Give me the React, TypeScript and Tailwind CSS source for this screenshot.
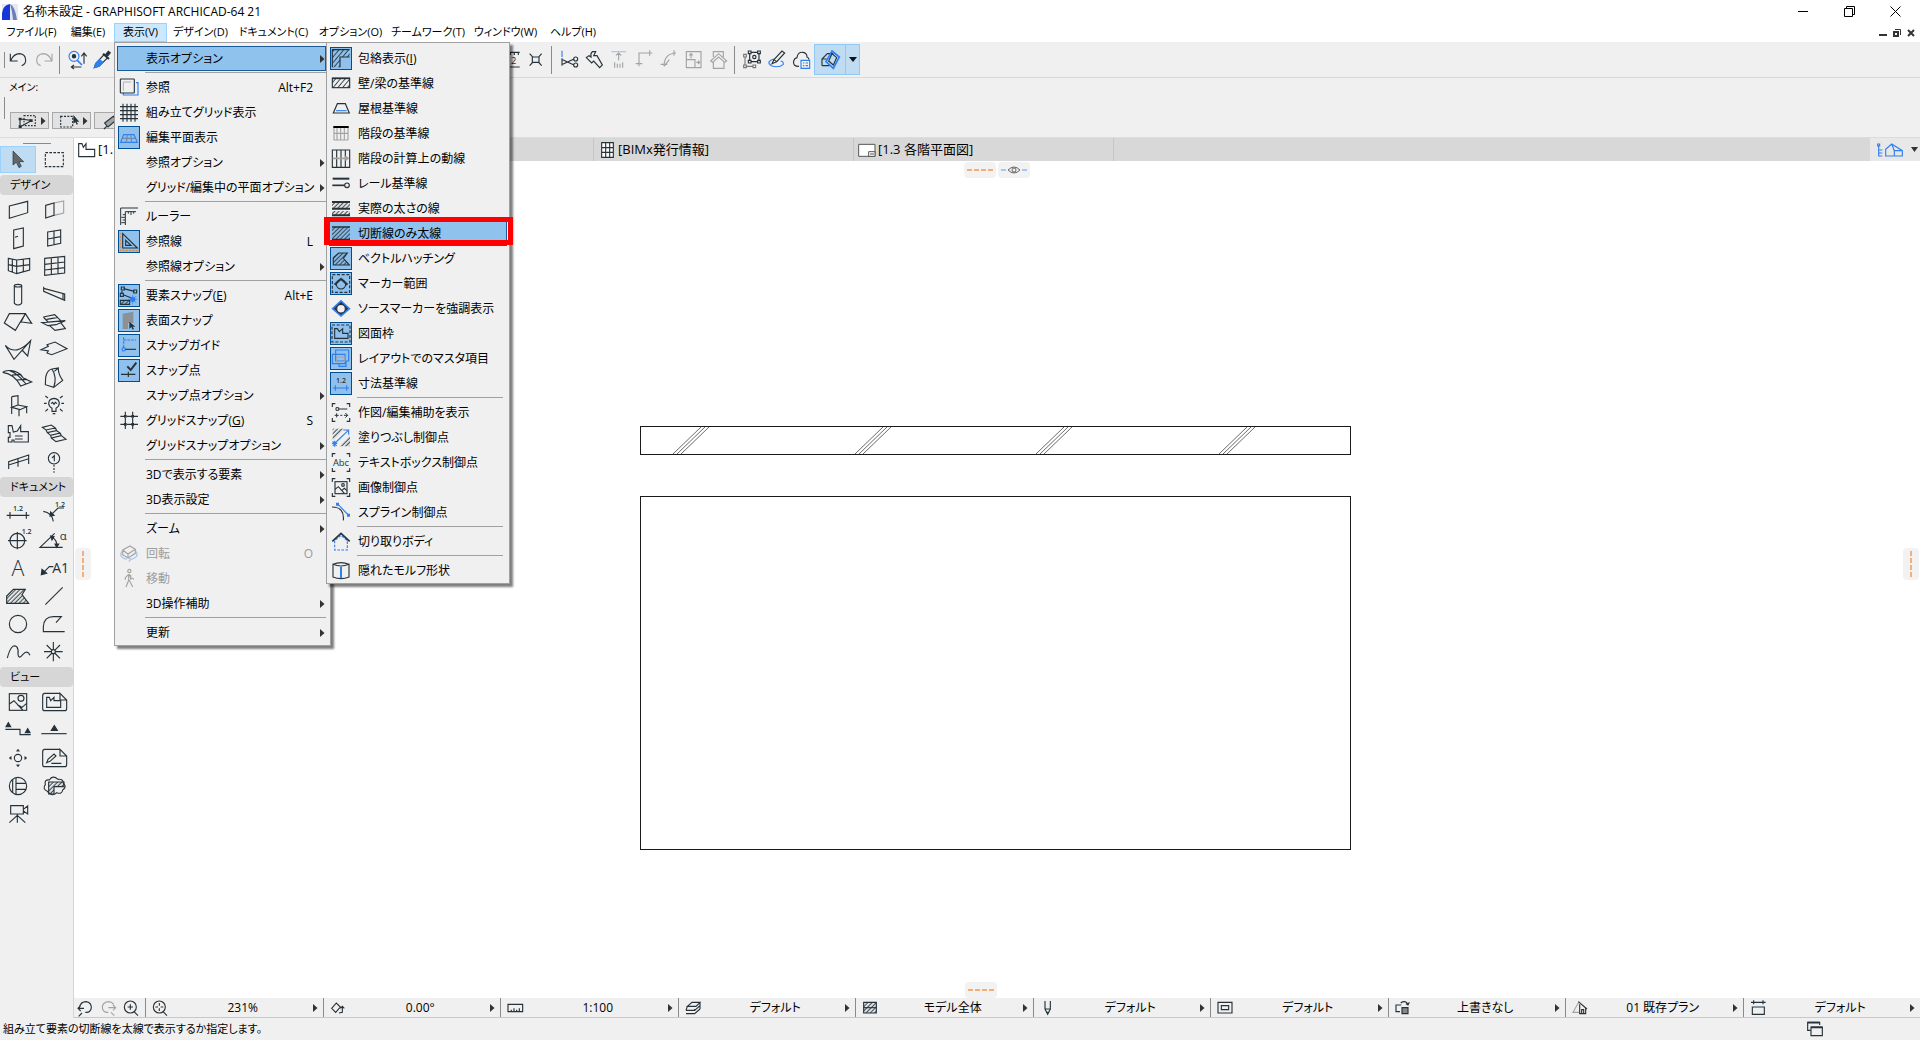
import type { ReactNode } from "react";
import clsx from "clsx";

const INK = "#26323a";
const BLUE = "#2f7ff0";
const GRAY = "#a3a3a3";

type IconProps = { w: number; h: number; children: ReactNode; className?: string };

// Icons are drawn on a grid three times finer than their size on screen.
function Icon({ w, h, children, className }: IconProps) {
  return (
    <svg
      width={w}
      height={h}
      viewBox={`0 0 ${w * 3} ${h * 3}`}
      fill="none"
      stroke={INK}
      strokeWidth={3.4}
      className={clsx("block shrink-0 overflow-visible", className)}
      aria-hidden="true"
    >
      {children}
    </svg>
  );
}

function IconText({ x, y, size, children, weight = 400 }: { x: number; y: number; size: number; children: string; weight?: number }) {
  return (
    <text x={x} y={y} fontSize={size} fontWeight={weight} fill={INK} stroke="none" textAnchor="middle" fontFamily="Open Sans, sans-serif">
      {children}
    </text>
  );
}

function Patterns() {
  return (
    <svg className="absolute size-0" aria-hidden="true">
      <defs>
        <pattern id="hatch" width="9" height="9" patternUnits="userSpaceOnUse" patternTransform="rotate(45)">
          <path d="M4 0V9" stroke={INK} strokeWidth="3" />
        </pattern>
        <pattern id="hatch-wide" width="11" height="11" patternUnits="userSpaceOnUse" patternTransform="rotate(40)">
          <path d="M4 0V11" stroke={INK} strokeWidth="2.6" />
        </pattern>
      </defs>
    </svg>
  );
}

function Arrow() {
  return (
    <svg width="5" height="8" viewBox="0 0 5 8" className="block shrink-0" aria-hidden="true">
      <path d="M0 0L4.500 4L0 8Z" fill="#333" />
    </svg>
  );
}

/* ---------- menus ---------- */

type MenuEntry =
  | "-"
  | { label: string; mnemonic?: string; keys?: string; icon?: ReactNode; on?: boolean; sub?: boolean; disabled?: boolean; hot?: boolean };

const viewMenu: MenuEntry[] = [
  { label: "表示オプション", sub: true, hot: true },
  "-",
  {
    label: "参照",
    keys: "Alt+F2",
    icon: (
      <>
        <path d="M54 20H60V57H16V50" stroke={BLUE} />
        <rect x="7" y="9" width="42" height="42" rx="2" />
        <path d="M16 44V18H40" stroke={GRAY} strokeWidth="2.500" />
      </>
    ),
  },
  { label: "組み立てグリッド表示", icon: <path d="M15 8V62M27 8V62M39 8V62M51 8V62M6 17H60M6 29H60M6 41H60M6 53H60" /> },
  {
    label: "編集平面表示",
    on: true,
    icon: (
      <>
        <path d="M17 26H48L58 49H8Z" stroke={BLUE} />
        <path d="M13 37H53M28 26L25 49M38 26L41 49" stroke="#6e8ba8" />
      </>
    ),
  },
  { label: "参照オプション", sub: true },
  { label: "グリッド/編集中の平面オプション", sub: true },
  "-",
  { label: "ルーラー", icon: <path d="M60 9H8V60M22 60V20H54M31 20V26M39 20V30M47 20V26M22 29H14M22 37H10M22 45H14M22 53H10" strokeWidth="3" /> },
  {
    label: "参照線",
    keys: "L",
    on: true,
    icon: (
      <>
        <path d="M7 8V62H60" stroke="#e08a3c" strokeDasharray="6 4" />
        <path d="M14 11V54H58ZM23 31V46H39Z" />
      </>
    ),
  },
  { label: "参照線オプション", sub: true },
  "-",
  {
    label: "要素スナップ",
    mnemonic: "E",
    keys: "Alt+E",
    on: true,
    icon: (
      <>
        <path d="M17 14L49 22M12 20V30" />
        <path d="M10 9H19V18H10ZM7 28H16V37H7ZM47 18H56V27H47ZM16 32L40 42" />
        <path d="M7 49H35V61H7Z" fill="url(#hatch)" />
        <circle cx="44" cy="46" r="8" fill={BLUE} stroke="none" />
        <path d="M44 33V61M31 46H58M34 36L55 57M55 36L34 57" stroke={BLUE} strokeWidth="2" />
      </>
    ),
  },
  {
    label: "表面スナップ",
    on: true,
    icon: (
      <>
        <path d="M14 14L46 8V42H30V60H14Z" fill="#8d9196" stroke="none" />
        <path d="M34 38V60L40 54L44 62L48 60L44 53H52Z" fill={INK} stroke="none" />
      </>
    ),
  },
  {
    label: "スナップガイド",
    on: true,
    icon: (
      <>
        <path d="M17 10V42M17 18H54" stroke={BLUE} strokeDasharray="8 3" />
        <circle cx="17" cy="46" r="5" stroke={BLUE} />
        <path d="M22 46H54" />
      </>
    ),
  },
  {
    label: "スナップ点",
    on: true,
    icon: (
      <>
        <path d="M28 22L38 33L55 11" strokeWidth="6" />
        <path d="M9 46H26M36 46H52M31 38V54M23 46H39" />
      </>
    ),
  },
  { label: "スナップ点オプション", sub: true },
  {
    label: "グリッドスナップ",
    mnemonic: "G",
    keys: "S",
    icon: (
      <>
        <path d="M22 8V60M44 8V60M7 22H60M7 46H60" strokeDasharray="16 3" />
        <path d="M18 22h8M40 22h8M18 46h8M40 46h8" strokeWidth="8" />
      </>
    ),
  },
  { label: "グリッドスナップオプション", sub: true },
  "-",
  { label: "3Dで表示する要素", sub: true },
  { label: "3D表示設定", sub: true },
  "-",
  { label: "ズーム", sub: true },
  {
    label: "回転",
    keys: "O",
    disabled: true,
    icon: (
      <>
        <path d="M14 24L36 12L52 22L30 36ZM14 24V38L30 48V36M52 22V34L30 48" stroke={GRAY} />
        <path d="M12 28Q0 46 26 52M54 28Q66 46 36 53M32 47L38 53L32 59" stroke="#a5c5ee" />
      </>
    ),
  },
  {
    label: "移動",
    disabled: true,
    icon: (
      <>
        <circle cx="34" cy="12" r="5" stroke={GRAY} />
        <path d="M32 22L22 32V38M34 22L38 32L48 37M32 22V40L24 60M34 40L44 60M38 24V38" stroke={GRAY} />
      </>
    ),
  },
  { label: "3D操作補助", sub: true },
  "-",
  { label: "更新", sub: true },
];

const brackets = <path d="M16 8H7V18M50 8H59V18M16 61H7V51M50 61H59V51" />;

const displayOptions: MenuEntry[] = [
  {
    label: "包絡表示",
    mnemonic: "I",
    on: true,
    icon: (
      <>
        <path d="M7 8H59V30H30V61H7Z" fill="url(#hatch-wide)" stroke="none" />
        <path d="M7 8H59M7 7V61M59 30H30V61" />
      </>
    ),
  },
  {
    label: "壁/梁の基準線",
    icon: (
      <>
        <rect x="7" y="19" width="52" height="28" fill="url(#hatch-wide)" />
        <path d="M6 19H60" strokeWidth="5" />
      </>
    ),
  },
  {
    label: "屋根基準線",
    icon: (
      <>
        <path d="M22 20H46L58 48H10Z" />
        <path d="M18 41H50" stroke={BLUE} />
      </>
    ),
  },
  {
    label: "階段の基準線",
    icon: (
      <>
        <path d="M12 14V55M21 14V55M32 14V55M43 14V55M54 14V55M12 34H54M12 54H54" stroke={GRAY} />
        <path d="M10 15H56" stroke="#000" strokeWidth="6" />
      </>
    ),
  },
  {
    label: "階段の計算上の動線",
    icon: (
      <>
        <path d="M7 9H59V61H7ZM20 9V61M33 9V61M46 9V61" />
        <path d="M8 34H54M46 28L54 34L46 40" stroke={GRAY} strokeWidth="5" />
      </>
    ),
  },
  {
    label: "レール基準線",
    icon: (
      <>
        <path d="M8 20H58" strokeWidth="6" />
        <path d="M7 40H44" strokeWidth="5" />
        <circle cx="51" cy="40" r="7" />
      </>
    ),
  },
  {
    label: "実際の太さの線",
    icon: (
      <>
        <path d="M6 14H60V34H6ZM6 42H60V56H6Z" fill="url(#hatch)" stroke="none" />
        <path d="M6 15H60M6 35H60M6 55H60" strokeWidth="6" />
      </>
    ),
  },
  {
    label: "切断線のみ太線",
    hot: true,
    icon: (
      <>
        <path d="M6 14H60V54H6Z" fill="url(#hatch)" stroke="none" />
        <path d="M6 15H60M6 53H60" strokeWidth="5" />
      </>
    ),
  },
  { label: "ベクトルハッチング", on: true, icon: <path d="M10 54V32L26 18H52L40 34L58 54Z" fill="url(#hatch)" /> },
  {
    label: "マーカー範囲",
    on: true,
    icon: (
      <>
        <rect x="7" y="8" width="52" height="53" strokeDasharray="9 5" />
        <path d="M12 36L33 17L54 36L50 40L33 24L16 40Z" fill={INK} strokeWidth="1" />
        <circle cx="33" cy="37" r="14" />
      </>
    ),
  },
  {
    label: "ソースマーカーを強調表示",
    icon: (
      <>
        <path d="M8 35L33 12L58 35L33 57Z" fill={INK} stroke={BLUE} strokeWidth="5" />
        <circle cx="33" cy="35" r="13" fill="#f0f0f0" />
      </>
    ),
  },
  {
    label: "図面枠",
    on: true,
    icon: (
      <>
        <rect x="6" y="9" width="54" height="51" strokeDasharray="9 5" />
        <path d="M14 20H22L28 29L38 20V34H54V49H14Z" />
      </>
    ),
  },
  {
    label: "レイアウトでのマスタ項目",
    on: true,
    icon: (
      <>
        <path d="M17 9H56V42H17ZM7 22H45V50H7ZM27 50V58H48V42" stroke={BLUE} />
        <path d="M20 30H44V44H20Z" stroke={GRAY} />
      </>
    ),
  },
  {
    label: "寸法基準線",
    on: true,
    icon: (
      <>
        <IconText x={33} y={32} size={21} weight={600}>1.2</IconText>
        <path d="M8 48H58M16 40V56M50 40V56" stroke={BLUE} />
      </>
    ),
  },
  "-",
  {
    label: "作図/編集補助を表示",
    icon: (
      <>
        {brackets}
        <path d="M18 20H26V28H18ZM26 24H52M14 43H26M20 37V49M31 43H37M42 43H53M46 36L53 43L46 50" strokeWidth="3" />
      </>
    ),
  },
  {
    label: "塗りつぶし制御点",
    icon: (
      <>
        <path d="M8 8H44L8 44ZM60 26V61H26Z" fill="url(#hatch)" stroke="none" />
        <path d="M12 54L54 14M40 12H56V26M6 52H22M14 44V62M8 46L20 60M20 46L8 60" stroke={BLUE} />
      </>
    ),
  },
  {
    label: "テキストボックス制御点",
    icon: (
      <>
        {brackets}
        <IconText x={33} y={44} size={28}>Abc</IconText>
      </>
    ),
  },
  {
    label: "画像制御点",
    icon: (
      <>
        {brackets}
        <rect x="15" y="17" width="36" height="36" />
        <circle cx="39" cy="27" r="4" />
        <path d="M15 40L25 32L43 52M35 44L43 37L51 44" />
      </>
    ),
  },
  {
    label: "スプライン制御点",
    icon: (
      <>
        <path d="M6 18Q44 18 40 58" />
        <path d="M22 8L55 42" stroke={BLUE} />
        <path d="M18 10H27M51 43H60" stroke={BLUE} strokeWidth="9" />
      </>
    ),
  },
  "-",
  {
    label: "切り取りボディ",
    icon: (
      <>
        <path d="M14 32V60H52V32L33 16Z" stroke={BLUE} strokeDasharray="8 4" />
        <path d="M7 34L33 10L59 34" strokeWidth="5" />
      </>
    ),
  },
  "-",
  {
    label: "隠れたモルフ形状",
    icon: (
      <>
        <path d="M9 16V54Q33 64 57 54V16Q33 26 9 16ZM9 16Q33 6 57 16" />
        <path d="M33 23V58" stroke={BLUE} strokeWidth="6" />
      </>
    ),
  },
];

function MenuLabel({ label, mnemonic }: { label: string; mnemonic?: string }) {
  return (
    <span className="whitespace-nowrap">
      {label}
      {mnemonic && (
        <>
          (<u>{mnemonic}</u>)
        </>
      )}
    </span>
  );
}

function MenuList({ entries, nested }: { entries: MenuEntry[]; nested?: boolean }) {
  return (
    <ul>
      {entries.map((e, i) =>
        e === "-" ? (
          <li key={i} role="separator" className={clsx("ml-7 h-1 pt-px", nested && "mr-1")}>
            <div className="h-px bg-[#a0a0a0]" />
          </li>
        ) : (
          <li key={i}>
            <button
              type="button"
              disabled={e.disabled}
              className={clsx(
                "flex h-[25px] w-full items-center border text-left text-xs",
                e.hot ? "border-[#1a5a96] bg-[#90c2ee]" : "border-transparent",
                e.disabled ? "text-[#9c9c9c]" : "text-black",
              )}
            >
              <span className={clsx("flex h-[23px] w-[22px] shrink-0 items-center justify-center", e.on && "bg-[#8fc1ec] outline outline-1 -outline-offset-1 outline-[#004e94]")}>
                {e.icon && <Icon w={22} h={23}>{e.icon}</Icon>}
              </span>
              <span className="ml-[6px] flex-1">
                <MenuLabel label={e.label} mnemonic={e.mnemonic} />
              </span>
              {e.keys && <span className="mr-3">{e.keys}</span>}
              {e.sub && <Arrow />}
            </button>
          </li>
        ),
      )}
    </ul>
  );
}

function ViewMenu() {
  return (
    <div className="absolute top-full left-0 z-20 w-[217px] border border-[#a0a0a0] bg-[#f0f0f0] pt-[3px] pr-1 pl-0.5 shadow-[3px_3px_2px_#00000080]">
      <MenuList entries={viewMenu} />
      <div className="absolute top-0 left-[211px] -mt-px w-[184px] border border-[#a0a0a0] bg-[#f0f0f0] px-0.5 pt-[3px] shadow-[3px_3px_2px_#00000080]">
        <MenuList entries={displayOptions} nested />
        <div className="absolute top-[174px] -left-[3px] h-[28px] w-[189px] border-[5px] border-[#ff0000]" />
      </div>
    </div>
  );
}

const menuBar = [
  { label: "ファイル(F)", width: "w-[61px]" },
  { label: "編集(E)", width: "w-[52px]" },
  { label: "表示(V)", width: "w-[53px]", open: true },
  { label: "デザイン(D)", width: "w-[67px]" },
  { label: "ドキュメント(C)", width: "w-[79px]" },
  { label: "オプション(O)", width: "w-[75px]" },
  { label: "チームワーク(T)", width: "w-[80px]" },
  { label: "ウィンドウ(W)", width: "w-[75px]" },
  { label: "ヘルプ(H)", width: "w-[60px]" },
];

function TitleBar() {
  return (
    <header className="flex h-[23px] items-center bg-white pr-[2px] pl-[2px]">
      <svg width="16" height="16" viewBox="0 0 16 16" aria-hidden="true">
        <rect width="16" height="16" fill="#e3e8f4" />
        <path d="M0 16V9Q1 1 8 0V16Z" fill="#1738d8" />
        <path d="M8 0Q13 2 15 16H11Q10 6 8 0Z" fill="#6f7fb8" />
      </svg>
      <h1 className="ml-[5px] text-xs">名称未設定 - GRAPHISOFT ARCHICAD-64 21</h1>
      <div className="ml-auto flex">
        <button type="button" aria-label="最小化" className="flex w-[46px] justify-center">
          <svg width="11" height="11" stroke="#000" fill="none"><path d="M0 5.500H10" /></svg>
        </button>
        <button type="button" aria-label="元に戻す" className="flex w-[46px] justify-center">
          <svg width="11" height="11" stroke="#000" fill="none"><path d="M.500 2.500H8.500V10.500H.500ZM2.500 2V.500H10.500V8.500H9" /></svg>
        </button>
        <button type="button" aria-label="閉じる" className="flex w-[46px] justify-center">
          <svg width="11" height="11" stroke="#000" fill="none"><path d="M.500 .500L10.500 10.500M10.500 .500L.500 10.500" /></svg>
        </button>
      </div>
    </header>
  );
}

function MenuBar() {
  return (
    <nav className="flex h-[19px] items-stretch bg-white pl-px">
      {menuBar.map((m) => (
        <div key={m.label} className={clsx("relative", m.width)}>
          <button
            type="button"
            className={clsx("flex size-full items-center justify-center border text-[11px] whitespace-nowrap", m.open ? "border-[#99d1ff] bg-[#cce8ff]" : "border-transparent")}
          >
            {m.label}
          </button>
          {m.open && <ViewMenu />}
        </div>
      ))}
      <div className="ml-auto flex items-center gap-[6px] pr-[5px]">
        <button type="button" aria-label="ウィンドウを最小化">
          <svg width="8" height="8"><path d="M0 6H8" stroke="#333" strokeWidth="2" /></svg>
        </button>
        <button type="button" aria-label="ウィンドウを元に戻す">
          <svg width="8" height="8" fill="none" stroke="#333"><path d="M1 3H5V7H1Z" strokeWidth="2" /><path d="M2 .500H7.500V6" /></svg>
        </button>
        <button type="button" aria-label="ウィンドウを閉じる">
          <svg width="8" height="8"><path d="M1 1L7 7M7 1L1 7" stroke="#333" strokeWidth="2" /></svg>
        </button>
      </div>
    </nav>
  );
}

/* ---------- toolbar ---------- */

const editTools: [string, ReactNode][] = [
  ["交差", <path d="M28 30H48V46H28ZM20 20L30 31M56 20L46 31M20 56L30 45M56 56L46 45" />],
];

const trimTools: [string, ReactNode][] = [
  [
    "切断",
    <>
      <path d="M18 11V30" stroke={BLUE} />
      <path d="M18 34V56M20 38L54 54M20 52L54 36" />
      <circle cx="59" cy="36" r="6" /><circle cx="59" cy="54" r="6" />
    </>,
  ],
  ["調整", <path d="M34 14L44 14L38 26L48 26L64 54L56 62L38 42L32 48L16 32L24 26L30 30Q28 18 34 14Z" />],
  [
    "延長",
    <>
      <path d="M16 14H60" stroke="#9cc4f5" />
      <path d="M38 40V18M30 25L38 18L46 25M26 46V62M34 50V62M42 50V62M50 46V62" stroke={GRAY} />
    </>,
  ],
  ["交差点", <path d="M24 58V18H64M14 50H34M56 10V26" stroke={GRAY} />],
  ["フィレット", <path d="M24 58Q24 20 60 18M14 52H34M54 10V26M24 58L40 38" stroke={GRAY} />],
  ["サイズ変更", <path d="M16 14H60V62H16ZM16 38H42V62M30 34V20M25 25L30 20L35 25M46 46H56M51 41L56 46L51 51" stroke={GRAY} />],
  ["屋根に合わせる", <path d="M22 30V14H52V30M14 42L38 20L62 42L56 46L38 30L20 46ZM22 46V64H54V46" stroke={GRAY} />],
];

const modelTools: [string, ReactNode][] = [
  [
    "グループ",
    <>
      <path d="M14 22H22V30H14ZM14 54H22V62H14ZM42 54H50V62H42ZM18 30V54M22 58H42" stroke="#777" />
      <path d="M28 12H36V20H28ZM56 12H64V20H56ZM28 40H36V48H28ZM56 40H64V48H56ZM36 16H56M36 44H56M32 20V40M60 20V40" />
      <circle cx="46" cy="30" r="5" />
    </>,
  ],
  [
    "マークアップ",
    <>
      <path d="M30 36Q4 44 22 56Q44 64 58 52Q58 42 50 42" stroke={BLUE} />
      <path d="M24 50L30 38L54 12L62 18L38 44ZM30 38L38 44" />
    </>,
  ],
  [
    "クラウド",
    <>
      <path d="M30 58Q10 58 14 42Q16 34 24 32Q26 14 42 16Q54 18 54 30Q60 32 60 38" />
      <path d="M36 40H62V64H36ZM42 48H46M50 48H57M42 56H46M50 56H57" stroke={BLUE} />
    </>,
  ],
];

function ToolButtons({ tools }: { tools: [string, ReactNode][] }) {
  return (
    <>
      {tools.map(([name, art]) => (
        <button key={name} type="button" aria-label={name} className="w-[25px]">
          <Icon w={25} h={25}>{art}</Icon>
        </button>
      ))}
    </>
  );
}

function Divider() {
  return <div className="h-7 w-px bg-[#8a8a8a]" />;
}

function Toolbar() {
  return (
    <div className="flex h-[36px] items-center border-b border-[#d8d8d8] bg-[#f0f0f0] pl-1">
      <div className="h-4 w-px bg-[#8a8a8a]" />
      <ToolButtons
        tools={[
          ["取り消し", <path d="M16 20V42H38M17 41Q26 20 44 20Q62 22 62 40Q62 52 50 56" />],
          ["やり直し", <path d="M66 20V42H44M65 41Q56 20 40 20Q20 22 20 40Q20 52 32 56" stroke={GRAY} />],
        ]}
      />
      <div className="w-1" />
      <Divider />
      <div className="w-1" />
      <ToolButtons
        tools={[
          [
            "検索と選択",
            <>
              <circle cx="30" cy="28" r="15" stroke={BLUE} />
              <circle cx="30" cy="28" r="5" fill={INK} />
              <path d="M60 20V50M52 28L60 18L68 28M22 60H52M30 54L22 60L30 66" />
              <path d="M40 40L54 54" stroke={BLUE} strokeWidth="5" />
            </>,
          ],
          [
            "パラメータ取得",
            <>
              <path d="M16 62L20 50L46 22L56 32L30 58Z" />
              <path d="M16 62L20 50L32 38L42 46L30 58Z" fill={BLUE} stroke={BLUE} />
              <path d="M42 20L60 36" strokeWidth="6" />
              <path d="M52 26L62 14" strokeWidth="11" />
            </>,
          ],
        ]}
      />
      {/* grid and guide tools sit behind the open menu */}
      <div className="w-[387px]" />
      <button type="button" aria-label="寸法単位" className="w-[22px]">
        <Icon w={22} h={25}>
          <path d="M6 16H56M6 60H56M16 16V24M28 16V24M40 16V24M52 16V24" />
          <IconText x={38} y={52} size={28}>2</IconText>
        </Icon>
      </button>
      <ToolButtons tools={editTools} />
      <div className="w-[3px]" />
      <Divider />
      <div className="w-1" />
      <ToolButtons tools={trimTools} />
      <div className="w-[3px]" />
      <Divider />
      <div className="w-1" />
      <ToolButtons tools={modelTools} />
      <button type="button" aria-label="トレース" className="flex h-[31px] w-8 items-center justify-center border border-[#90c8f6] bg-[#c0dcf3]">
        <Icon w={25} h={25}>
          <path d="M12 56V36L28 20H46M12 56H34M12 36H26" />
          <path d="M42 12L64 30L46 64L24 44Z" stroke={BLUE} strokeWidth="5" />
          <path d="M42 20L56 32L46 54L32 42Z" />
        </Icon>
      </button>
      <button type="button" aria-label="トレースオプション" className="flex h-[31px] w-[14px] items-center justify-center border border-l-0 border-[#90c8f6] bg-[#c0dcf3]">
        <svg width="8" height="5"><path d="M0 0H8L4 5Z" fill="#111" /></svg>
      </button>
    </div>
  );
}

function InfoBox() {
  const fields: [string, ReactNode][] = [
    ["選択方法", <><path d="M24 8H58V38H24Z" strokeDasharray="5 4" /><path d="M12 18L46 22M12 20V42M12 42L44 24" /><path d="M8 18H17M40 23H50M8 41H17" strokeWidth="8" /></>],
    ["選択範囲", <><path d="M8 10H44V42H8Z" strokeDasharray="6 4" /><path d="M46 6V32L52 27L56 35L60 33L56 26H64Z" fill={INK} stroke="none" /></>],
    ["変形", <path d="M14 30L40 10L50 20L24 42ZM20 40L12 48" fill={GRAY} />],
  ];
  return (
    <div className="h-[60px] border-b border-[#dcdcdc] bg-[#f0f0f0] pl-1">
      <p className="pt-[3px] pl-[5px] text-[10px] leading-3">メイン:</p>
      <div className="mt-1 flex">
        <div className="h-[22px] w-px bg-[#8a8a8a]" />
        <div className="mt-[15px] ml-[5px] flex gap-[3px]">
          {fields.map(([name, art]) => (
            <button key={name} type="button" aria-label={name} className="flex h-[17px] w-[39px] items-center justify-between border border-[#a8a8a8] bg-[#e2e2e2] pr-[2px] pl-[5px]">
              <Icon w={22} h={16}>{art}</Icon>
              <Arrow />
            </button>
          ))}
        </div>
      </div>
    </div>
  );
}

/* ---------- toolbox ---------- */

const page = <path d="M72 16H26Q20 16 20 24V62Q20 68 26 68H86Q92 68 92 62V36L72 16V36H92" />;
const marker = "M0 0L7 -12L14 0Z";

const designTools: [string, ReactNode][] = [
  ["壁", <path d="M28 30L83 16V50L28 67Z" />],
  ["ドア付き壁", <><path d="M54 21L83 15V51L54 58" stroke={GRAY} /><path d="M29 28L54 21V58L29 66Z" /></>],
  ["ドア", <path d="M41 18L70 12V66L41 74ZM45 40L54 37" />],
  ["窓", <path d="M35 24L74 18V58L35 66ZM54 21V62M35 45L74 38" />],
  ["コーナーウィンドウ", <path d="M25 19L50 24L89 19V54L50 65L25 56ZM37 21V60M50 24V65M70 21V60M25 38L50 43L89 38" />],
  ["カーテンウォール", <path d="M26 19L86 13V63L26 70ZM46 17V67M66 15V65M26 37L86 30M26 54L86 47" />],
  ["柱", <><ellipse cx="54" cy="17" rx="11" ry="4" /><path d="M43 17V70Q54 80 65 70V17" /></>],
  ["梁", <path d="M23 20V34L86 61V42L23 25M81 40V58" />],
  ["屋根", <path d="M13 45L28 17H76L46 67ZM76 17L95 46L65 42M76 17L62 44" />],
  ["シェル", <path d="M22 27L56 20L74 38M22 27L36 42M18 44L88 38L60 50L36 53ZM40 52L57 67L88 62L74 44M32 34L66 28" />],
  ["曲面", <path d="M16 28Q48 62 92 14L83 60L66 42M92 14L42 70L16 28" />],
  ["スラブ", <path d="M15 41L37 31L33 26L57 18L93 38L47 56L33 51L37 45Z" />],
  ["メッシュ", <path d="M8 25Q16 18 34 20Q56 22 70 42L95 54L62 66Q44 30 8 25M36 33L64 31M48 48L80 46M28 20Q50 26 78 60" />],
  ["モルフ", <path d="M29 40Q33 18 48 15L67 12Q66 30 80 49L53 70L28 62ZM48 15Q64 40 53 70M67 12L55 22" />],
  ["オブジェクト", <path d="M35 14L54 11V39M35 14V66M35 46L54 39L80 44L60 53ZM57 53V73M80 44V64" />],
  [
    "ランプ",
    <>
      <path d="M48 58V49Q38 43 38 34Q39 20 54 19Q69 20 70 34Q70 43 60 49V58ZM50 65H58M45 35L50 31L54 37L58 31L63 35" />
      <path d="M24 34H32M76 34H84M28 12L36 18M80 12L72 18M28 58L36 51M80 58L72 51" />
    </>,
  ],
  ["ゾーン", <path d="M25 17H36L40 36L52 33L62 17V35H85V66H42V60H36V66H25V52H30V38H25ZM45 48H68M45 57H68" />],
  ["階段", <path d="M19 22L46 15L58 24L30 30ZM30 30L34 38L62 32L58 24M34 38L44 46L72 39L62 32M44 46L46 54L76 47L72 39M46 54L60 65L90 58L76 47" />],
  ["手摺り", <path d="M26 63V41L86 21V48M28 50L86 32M54 30V56" />],
  ["通り芯", <><circle cx="54" cy="31" r="17" /><path d="M54 50V74" strokeDasharray="6 4" /><path d="M48 30L55 23V40" /></>],
];

const documentTools: [string, ReactNode][] = [
  ["寸法", <><IconText x={54} y={38} size={21} weight={600}>1.2</IconText><path d="M20 52H88M30 42V62M79 42V62" /></>],
  ["半径寸法", <><IconText x={72} y={27} size={21} weight={600}>1.2</IconText><path d="M84 30H66L46 50M22 40Q48 44 52 70" /><path d="M42 54L44 42L54 52Z" fill={INK} /></>],
  ["高さ寸法", <><circle cx="52" cy="44" r="22" /><path d="M24 44H80M52 18V70" /><IconText x={80} y={24} size={21} weight={600}>1.2</IconText></>],
  ["角度寸法", <><path d="M80 64H12L56 22M48 34Q64 42 62 62" /><path d="M44 30L54 32L48 42ZM57 54L68 54L62 64Z" fill={INK} /><IconText x={82} y={42} size={34}>α</IconText></>],
  ["テキスト", <IconText x={54} y={67} size={64} weight={300}>A</IconText>],
  ["ラベル", <><path d="M20 58L40 38H52" /><path d="M16 62L18 46L32 58Z" fill={INK} /><IconText x={74} y={56} size={42}>A1</IconText></>],
  ["塗りつぶし", <path d="M20 64V42L40 22H76L66 38L86 64Z" fill="url(#hatch)" />],
  ["線", <path d="M28 68L80 16" />],
  ["円", <circle cx="54" cy="42" r="26" />],
  ["ポリライン", <path d="M86 65H22V50Q24 20 52 20H76L60 38" />],
  ["スプライン", <path d="M22 60Q34 14 50 26Q56 34 54 48Q56 66 68 50Q82 34 90 52" />],
  ["ホットスポット", <><circle cx="52" cy="41" r="6" /><path d="M52 12V35M52 47V70M24 41H46M58 41H80M32 21L48 37M72 21L56 37M32 61L48 45M72 61L56 45" /></>],
];

const viewTools: [string, ReactNode][] = [
  ["図", <><rect x="28" y="17" width="52" height="50" /><circle cx="63" cy="31" r="9" /><path d="M28 48L42 38L68 66M52 50L66 58L80 46" /></>],
  ["図面", <>{page}<path d="M32 28H40L44 38L54 28V38H74V58H32Z" /></>],
  ["断面図", <><path d="M16 40H60V56H92" /><path d={marker} transform="translate(18 32)" fill={INK} /><path d={marker} transform="translate(76 50)" fill={INK} /></>],
  ["立面図", <><path d="M16 53H92" /><path d="M46 43L55 29L64 43Z" fill={INK} /></>],
  ["展開図", <><circle cx="54" cy="42" r="11" /><path d="M49 22L54 15L59 22ZM49 62L54 69L59 62ZM34 37L27 42L34 47ZM74 37L81 42L74 47Z" fill={INK} strokeWidth="1" /></>],
  ["ワークシート", <>{page}<path d="M32 56L36 46L54 30L60 36L42 52ZM46 58H76" /></>],
  ["詳細図", <><circle cx="54" cy="42" r="26" /><path d="M38 22V62M48 17V67M48 34H78M48 52H78" /></>],
  [
    "変更",
    <>
      <path d="M34 58Q18 50 28 38Q24 22 40 24Q50 8 66 22Q82 20 82 34Q94 44 80 54Q78 68 62 62Q48 76 34 58Z" />
      <path d="M38 30H84V44H54V66H38Z" fill="url(#hatch)" />
    </>,
  ],
  ["カメラ", <path d="M32 17H70V42H32ZM70 28L83 18V42L70 33M52 42V68M52 46L28 68M52 46L76 68" />],
];

function ToolGroup({ title, tools }: { title: string; tools: [string, ReactNode][] }) {
  return (
    <section>
      <h2 className="my-px h-5 rounded-sm bg-[#d6d6d6] pl-[10px] text-[11px] leading-5 whitespace-nowrap">{title}</h2>
      <div className="grid grid-cols-[36px_36px]">
        {tools.map(([name, art]) => (
          <button key={name} type="button" aria-label={name}>
            <Icon w={36} h={28}>{art}</Icon>
          </button>
        ))}
      </div>
    </section>
  );
}

function Toolbox() {
  return (
    <aside className="w-[74px] shrink-0 border-r border-[#d4d4d4] bg-[#f0f0f0]">
      <div className="mx-auto mt-[5px] h-px w-7 bg-[#8a8a8a]" />
      <div className="mt-[2px] flex pb-px">
        <button type="button" aria-label="矢印" className="border border-[#99d1ff] bg-[#c0dcf3]">
          <Icon w={34} h={25}>
            <path d="M36 12V54L46 46L54 62L61 58L54 44H68Z" fill="#666" strokeWidth="2" />
          </Icon>
        </button>
        <button type="button" aria-label="矩形選択">
          <Icon w={36} h={27}>
            <rect x="28" y="20" width="54" height="42" strokeDasharray="8 4" />
          </Icon>
        </button>
      </div>
      <ToolGroup title="デザイン" tools={designTools} />
      <ToolGroup title="ドキュメント" tools={documentTools} />
      <ToolGroup title="ビュー" tools={viewTools} />
    </aside>
  );
}

/* ---------- drawing area ---------- */

function TabBar() {
  const tab = "flex w-[260px] shrink-0 items-center border-r border-[#c6c6c6] text-[13px]";
  return (
    <div className="flex h-[23px] bg-[#d8d8d8]">
      <button type="button" className="flex w-[260px] shrink-0 items-center gap-[2px] bg-white pl-1 text-[13px]">
        <Icon w={18} h={16}>
          <path d="M2 5H12L16 16L24 5V22H50V44H2Z" />
        </Icon>
        [1.
      </button>
      <button type="button" aria-label="3D" className={tab} />
      <button type="button" className={clsx(tab, "gap-1 pl-[7px]")}>
        <Icon w={13} h={16}>
          <path d="M2 2H37V46H2ZM14 2V46M26 2V46M2 17H37M2 31H37" fill="#fff" />
        </Icon>
        [BIMx発行情報]
      </button>
      <button type="button" className={clsx(tab, "gap-[2px] pl-1")}>
        <Icon w={18} h={14}>
          <path d="M2 4H51V40H2Z" fill="#fff" stroke="#555" strokeWidth="3" />
          <path d="M32 26H51V40H32ZM36 33H48" fill="#fff" stroke="#555" strokeWidth="3" />
        </Icon>
        [1.3 各階平面図]
      </button>
      <button type="button" aria-label="ナビゲータ" className="ml-auto flex w-[50px] items-center gap-[7px] bg-[#e8e8e8] pl-[7px]">
        <Icon w={27} h={16}>
          <path d="M2 6H8V12H2ZM5 10V42H16M5 24H16M5 33H16M26 42V22L44 6L76 26V42ZM52 42V26L44 6M52 26H76" stroke={BLUE} />
        </Icon>
        <svg width="7" height="5"><path d="M0 0H7L3.500 5Z" fill="#333" /></svg>
      </button>
    </div>
  );
}

function Wall() {
  const groups = [33, 215, 396, 579];
  return (
    <svg viewBox="0 0 711 426" className="w-full" fill="none" stroke="#1a1a1a" aria-label="平面図">
      <rect x=".5" y=".5" width="710" height="28" />
      {groups.map((x) => (
        <path key={x} d={`M${x} 28L${x + 28} 1M${x + 4} 28L${x + 32} 1M${x + 8} 28L${x + 36} 1`} strokeWidth=".8" stroke="#444" />
      ))}
      <rect x=".5" y="70.5" width="710" height="353" />
    </svg>
  );
}

function Dashes({ vertical }: { vertical?: boolean }) {
  return vertical ? (
    <div className="flex h-8 w-4 items-center justify-center rounded-sm bg-[#f2f2f2]">
      <svg width="2" height="26"><path d="M1 0V26" stroke="#f9954a" strokeWidth="1.400" strokeDasharray="5 2" /></svg>
    </div>
  ) : (
    <div className="flex h-4 w-8 items-center justify-center rounded-sm bg-[#f2f2f2]">
      <svg width="26" height="2"><path d="M0 1H26" stroke="#f9954a" strokeWidth="1.400" strokeDasharray="5 2" /></svg>
    </div>
  );
}

function Canvas() {
  return (
    <main className="relative flex flex-1 justify-center bg-white pr-[3px]">
      <div className="mt-[265px] w-[711px]">
        <Wall />
      </div>
      <div className="absolute top-px left-1/2 flex -translate-x-1/2 gap-[2px]">
        <Dashes />
        <div className="flex h-4 w-8 items-center justify-center rounded-sm bg-[#f2f2f2]">
          <svg width="26" height="10" fill="none" stroke="#666">
            <path d="M0 5H5M21 5H26" stroke="#5a9cf5" />
            <path d="M7 5Q13 -1 19 5Q13 11 7 5Z" />
            <circle cx="13" cy="5" r="2" />
          </svg>
        </div>
      </div>
      <div className="absolute bottom-0 left-1/2 -translate-x-full">
        <Dashes />
      </div>
      <div className="absolute bottom-1/2 left-px">
        <Dashes vertical />
      </div>
      <div className="absolute right-px bottom-1/2">
        <Dashes vertical />
      </div>
    </main>
  );
}

const quickOptions: { value: string; name: string; icon: ReactNode }[] = [
  { name: "ズーム", value: "231%", icon: <><circle cx="25" cy="24" r="18" /><path d="M36 38L48 50M25 12V20M25 28V36M13 24H21M29 24H37" /></> },
  { name: "回転", value: "0.00°", icon: <path d="M8 28L22 12L34 24L20 40ZM30 42L40 40V24M34 28L40 22L46 28" /> },
  { name: "縮尺", value: "1:100", icon: <path d="M6 16H50V38H6ZM16 38V32M24 38V28M32 38V32M40 38V28" /> },
  { name: "レイヤー", value: "デフォルト", icon: <path d="M10 22L24 10H48L36 22ZM6 34H32L48 20M6 44H32L48 30M10 22L6 34M32 34V30M48 10V30" /> },
  { name: "構造表示", value: "モデル全体", icon: <><path d="M8 10H46V42H8Z" fill="url(#hatch)" /><path d="M8 26H46" /></> },
  { name: "ペンセット", value: "デフォルト", icon: <path d="M18 6V30L26 46L34 30V6M18 30H34M24 40H28" /> },
  { name: "モデル表示", value: "デフォルト", icon: <path d="M6 10H48V42H6ZM16 20H38V32H16Z" /> },
  { name: "表現の上書き", value: "上書きなし", icon: <><path d="M22 18H6V38H18M20 12Q34 2 42 16M36 14L42 18L46 10" /><path d="M24 26H42V44H24Z" fill="#888" /></> },
  { name: "リノベーション", value: "01 既存プラン", icon: <><path d="M24 8L6 40H24" stroke={GRAY} /><path d="M22 8L48 30M26 16V44H44V28M32 44V32H38V44" /></> },
  { name: "寸法設定", value: "デフォルト", icon: <path d="M6 10H50M14 4V16M42 4V16M10 24H46V46H10Z" /> },
];

function QuickOptions() {
  return (
    <div className="flex h-[20px] border-b border-[#c8c8c8] bg-[#f0f0f0]">
      <div className="flex w-[71px] shrink-0 items-center gap-[5px] pl-[2px]">
        <button type="button" aria-label="前のズーム"><Icon w={18} h={18}><path d="M10 26Q14 8 30 8Q46 10 46 26Q44 42 28 40M6 28H24M14 20L6 28L14 36M18 42L8 52" /></Icon></button>
        <button type="button" aria-label="次のズーム"><Icon w={18} h={18}><path d="M44 16Q38 8 28 8Q10 10 10 26Q12 42 28 40M28 26H50M42 18L50 26L42 34M36 40L46 50" stroke={GRAY} /></Icon></button>
        <button type="button" aria-label="拡大"><Icon w={18} h={18}><circle cx="25" cy="24" r="18" /><path d="M36 38L48 50M25 16V32M17 24H33" /></Icon></button>
      </div>
      {quickOptions.map((q) => (
        <button key={q.name} type="button" aria-label={`${q.name} ${q.value}`} className="flex flex-1 items-center border-l border-[#8a8a8a] pr-[5px] pl-[5px] text-xs">
          <Icon w={18} h={18}>{q.icon}</Icon>
          <span className="flex-1 pl-1 text-center">{q.value}</span>
          <Arrow />
        </button>
      ))}
    </div>
  );
}

export default function App() {
  return (
    <div className="flex min-h-screen flex-col overflow-hidden bg-[#f0f0f0] font-['Open_Sans','Noto_Sans_CJK_JP',sans-serif] text-black [font-feature-settings:'palt']">
      <Patterns />
      <TitleBar />
      <MenuBar />
      <Toolbar />
      <InfoBox />
      <div className="flex flex-1">
        <Toolbox />
        <div className="flex min-w-0 flex-1 flex-col">
          <TabBar />
          <Canvas />
          <QuickOptions />
        </div>
      </div>
      <footer className="flex h-[22px] items-center justify-between pr-[97px] pl-[3px] text-[11px]">
        <p>組み立て要素の切断線を太線で表示するか指定します。</p>
        <button type="button" aria-label="ウィンドウ一覧">
          <Icon w={16} h={16}>
            <path d="M10 28H2V4H38V12M12 18H46V44H12Z" />
            <path d="M2 5H38M12 19H46" strokeWidth="5" />
          </Icon>
        </button>
      </footer>
    </div>
  );
}
